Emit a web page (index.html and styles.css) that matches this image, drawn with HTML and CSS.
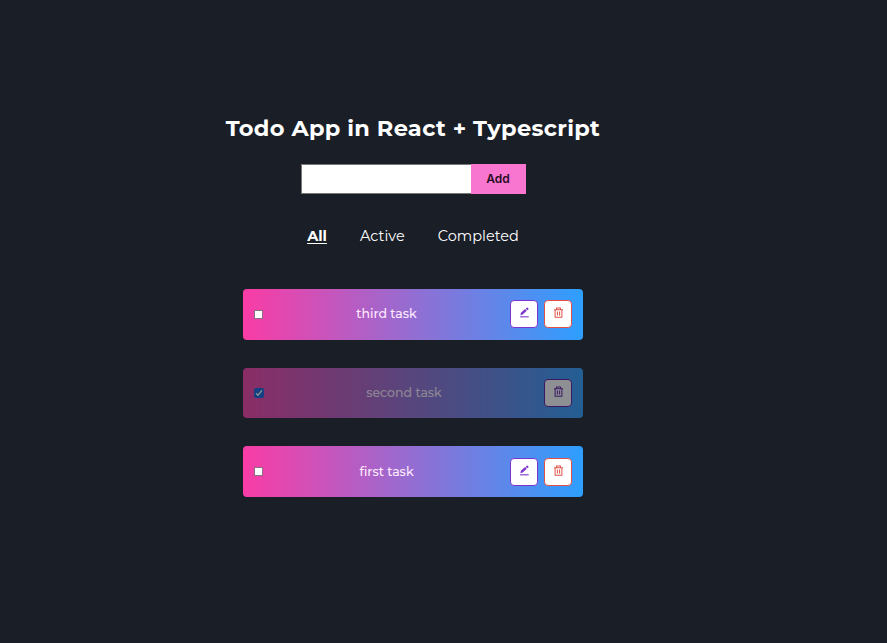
FILE: index.html
```
<!DOCTYPE html>
<html lang="en">
<head>
<meta charset="utf-8">
<title>Todo App</title>
<link rel="stylesheet" href="styles.css">
</head>
<body>
<svg class="symbols" aria-hidden="true">
  <symbol id="pencil" viewBox="0 0 12 12"><path d="M1.2 10.7h9.4" stroke="currentColor" stroke-width="1.2"/><path d="M1.5 8.9l.6-2.5 4.5-4.1 1.9 1.8-4.5 4.2z M7.3 1.8l1.1-1q.5-.4 1 0l.9.8q.4.5 0 .9l-1.1 1z" fill="currentColor"/></symbol>
  <symbol id="trash" viewBox="0 0 12 12"><path d="M1.1 2.9h9.8M3.8 2.8V1.1h4.4v1.7M2.3 3v8.1h7.4V3M4.8 4.8v4.4M7.2 4.8v4.4" fill="none" stroke="currentColor" stroke-width="1.1" stroke-linejoin="round"/></symbol>
</svg>
<main class="app">
  <h1 class="title"><span>Todo App in React + Typescript</span></h1>
  <form class="entry">
    <input class="entry-input" type="text" aria-label="Task">
    <button class="entry-add" type="button">Add</button>
  </form>
  <nav class="filters">
    <a class="filter active">All</a>
    <a class="filter mid">Active</a>
    <a class="filter last">Completed</a>
  </nav>
  <ul class="tasks">
    <li class="task">
      <span class="check"></span>
      <span class="label third">third task</span>
      <button class="action edit" aria-label="Edit"><svg><use href="#pencil"/></svg></button>
      <button class="action delete" aria-label="Delete"><svg><use href="#trash"/></svg></button>
    </li>
    <li class="task done">
      <span class="check checked"><svg viewBox="0 0 10 10"><path d="M2 5.2l2 2 4-4.8" fill="none" stroke="#fff" stroke-width="1.4"/></svg></span>
      <span class="label second">second task</span>
      <button class="action delete" aria-label="Delete"><svg><use href="#trash"/></svg></button>
    </li>
    <li class="task">
      <span class="check"></span>
      <span class="label first">first task</span>
      <button class="action edit" aria-label="Edit"><svg><use href="#pencil"/></svg></button>
      <button class="action delete" aria-label="Delete"><svg><use href="#trash"/></svg></button>
    </li>
  </ul>
</main>
</body>
</html>
```
FILE: styles.css
```
* { box-sizing: border-box; }
body {
  margin: 0;
  min-height: 643px;
  background: #1a1e27;
  color: #fff;
  font-family: Montserrat, Inter, "Open Sans", sans-serif;
}
.symbols { display: none; }
.app {
  width: 826px;
  padding-top: 113px;
  display: flex;
  flex-direction: column;
  align-items: center;
}
.title {
  margin: 0;
  font-size: 22.5px;
  line-height: 30px;
  font-weight: 700;
  white-space: nowrap;
  letter-spacing: 0.3px;
}
.entry {
  display: flex;
  width: 225px;
  height: 30px;
  margin: 20.5px 0 0;
}
.entry-input {
  width: 170px;
  padding: 0 8px;
  border: 1px solid #777;
  border-right: 0;
  background: #fff;
}
.entry-add {
  flex: 1;
  padding: 0;
  border: 0;
  background: #f875d0;
  color: #260d22;
  font: 600 12px/28px Inter, sans-serif;
}
.filters {
  display: flex;
  gap: 33px;
  margin-top: 32px;
  font-size: 14.5px;
  line-height: 20px;
}
.filter { white-space: nowrap; }
.active {
  font-weight: 700;
  text-decoration: underline;
  text-underline-offset: 2px;
}
.tasks {
  width: 340px;
  margin: 43.5px 0 0;
  padding: 0;
  list-style: none;
  display: grid;
  gap: 28.2px;
}
.task {
  display: flex;
  align-items: center;
  gap: 6px;
  height: 50.5px;
  padding: 0 11px;
  border-radius: 4px;
  background: linear-gradient(90deg, #fa3ca5, #2d9fff);
}
.check {
  width: 9px;
  height: 9px;
  border: 1px solid #8b6f83;
  border: 0.5px solid #8b6f83;
  background: #fff;
}
.checked {
  width: 10px;
  height: 10px;
  border: 0;
  border-radius: 2px;
  background: #0b63df;
}
.checked svg { display: block; width: 10px; height: 10px; }
.label {
  flex: 1;
  text-align: center;
  font-size: 12.5px;
  font-weight: 500;
  line-height: 18px;
  color: #ffeaff;
}
.action {
  display: flex;
  justify-content: center;
  width: 28px;
  height: 28px;
  padding: 6px 0 0;
  border: 1px solid;
  border-radius: 4px;
  background: #fff;
}
.action svg { width: 11px; height: 11px; }
.edit { color: #7c35cf; }
.delete { color: #e05247; }
.done { opacity: 0.5; }
.done .delete { color: #5b159e; }
```
